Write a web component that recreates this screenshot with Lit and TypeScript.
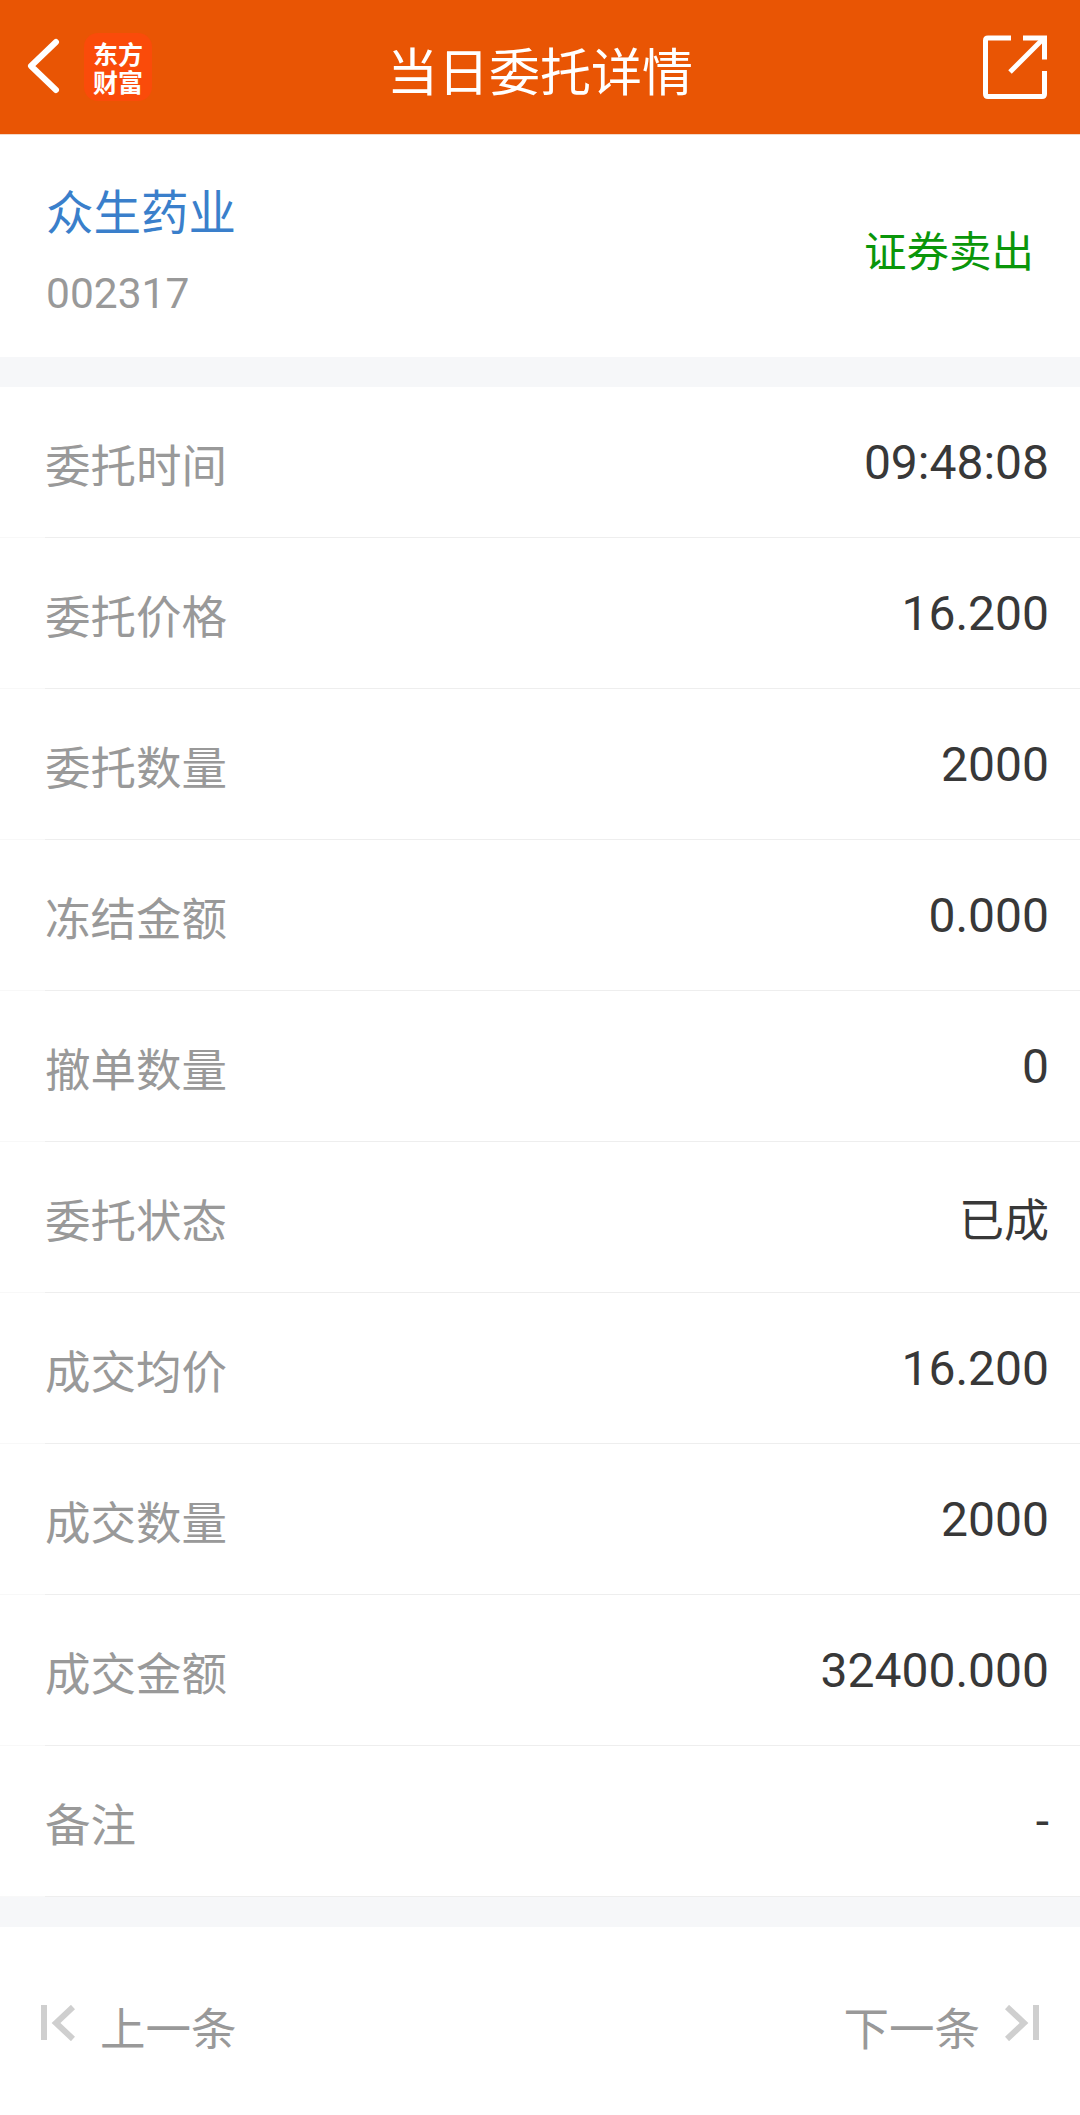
import { LitElement, html, css } from "lit";
import { customElement } from "lit/decorators.js";
import { classMap } from "lit/directives/class-map.js";

const rows: [string, string][] = [
  ["委托时间", "09:48:08"],
  ["委托价格", "16.200"],
  ["委托数量", "2000"],
  ["冻结金额", "0.000"],
  ["撤单数量", "0"],
  ["委托状态", "已成"],
  ["成交均价", "16.200"],
  ["成交数量", "2000"],
  ["成交金额", "32400.000"],
  ["备注", "-"],
];

@customElement("app-root")
export class AppRoot extends LitElement {
  static styles = css`
    :host {
      display: block;
      width: 1080px;
      height: 2115px;
      background: #fff;
      overflow: hidden;
      font-family: Roboto, "Noto Sans CJK SC", sans-serif;
    }
    .header {
      height: 135px;
      background: #e95504;
      display: flex;
      align-items: center;
      position: relative;
      border-bottom: 1px solid #f3d9c8;
      box-sizing: border-box;
    }
    .back { margin-left: 26px; width: 36px; height: 58px; flex: none; }
    .logo {
      margin-left: 22px;
      width: 68px;
      height: 68px;
      flex: none;
      border-radius: 14px;
      background: #fa4b0a;
      color: #fff;
      font-family: "Noto Sans CJK SC", sans-serif;
      font-weight: 700;
      font-size: 25px;
      line-height: 28px;
      display: flex;
      align-items: center;
      justify-content: center;
      text-align: center;
    }
    .logo span { width: 52px; display: block; }
    .title {
      position: absolute;
      left: 200px;
      right: 200px;
      top: 0;
      text-align: center;
      color: #fff;
      font-size: 51px;
      line-height: 138px;
      font-family: "Noto Sans CJK SC", sans-serif;
    }
    .share { margin-left: auto; margin-right: 33px; width: 64px; height: 64px; flex: none; }
    .stock {
      height: 222px;
      box-sizing: border-box;
      display: flex;
      align-items: center;
      justify-content: space-between;
      padding: 0 46px;
    }
    .stock-info { margin-top: 6px; }
    .name {
      color: #3a7fcb;
      font-size: 47.500px;
      line-height: 60px;
      margin-bottom: 29px;
      font-family: "Noto Sans CJK SC", sans-serif;
    }
    .code { color: #999; font-size: 42.500px; line-height: 50px; }
    .side {
      color: #0a960a;
      font-size: 42.500px;
      line-height: 50px;
      margin-top: 5px;
      font-family: "Noto Sans CJK SC", sans-serif;
    }
    .gap { height: 30px; background: #f6f7f9; }
    .row {
      height: 151px;
      box-sizing: border-box;
      padding: 0 31px 1px 45px;
      background:
        linear-gradient(#eeeeee, #eeeeee) 45px 100% / 100% 1px no-repeat,
        linear-gradient(#f8f8f8, #f8f8f8) 0 100% / 100% 1px no-repeat;
      display: flex;
      align-items: center;
      justify-content: space-between;
    }
    .label {
      color: #999;
      font-size: 45.500px;
      margin-top: 2px;
      font-family: "Noto Sans CJK SC", sans-serif;
    }
    .value {
      color: #383838;
      font-size: 48px;
      font-family: Roboto, "Noto Sans CJK SC", sans-serif;
    }
    .value.cjk { font-size: 45px; }
    .footer {
      height: 189px;
      display: flex;
      align-items: center;
      justify-content: space-between;
      padding: 0 41px;
      color: #999;
      font-size: 45.500px;
      font-family: "Noto Sans CJK SC", sans-serif;
    }
    .nav { display: flex; align-items: center; gap: 25px; margin-bottom: -8px; }
    .nav svg { width: 34px; height: 36px; flex: none; margin-top: -6px; }
  `;

  render() {
    return html`
      <div class="header">
        <svg class="back" viewBox="0 0 36 58" fill="none" stroke="#fff" stroke-width="6" stroke-linecap="round" stroke-linejoin="round">
          <path d="M30 4 L5 28 L30 52" />
        </svg>
        <div class="logo"><span>东方财富</span></div>
        <div class="title">当日委托详情</div>
        <svg class="share" viewBox="0 0 64 64" fill="none" stroke="#fff" stroke-width="5">
          <path d="M28 3 H5 Q2.5 3 2.500 5.500 V59 Q2.500 61.500 5 61.500 H59 Q61.500 61.500 61.500 59 V36" stroke-linejoin="round" />
          <path d="M40 3 H61.500 V24.500" />
          <path d="M27 37 L60 4" />
        </svg>
      </div>
      <div class="stock">
        <div class="stock-info">
          <div class="name">众生药业</div>
          <div class="code">002317</div>
        </div>
        <div class="side">证券卖出</div>
      </div>
      <div class="gap"></div>
      ${rows.map(
        ([k, v]) => html`<div class="row"><span class="label">${k}</span><span class=${classMap({ value: true, cjk: v === "已成" })}>${v}</span></div>`
      )}
      <div class="gap"></div>
      <div class="footer">
        <div class="nav">
          <svg viewBox="0 0 34 36" fill="none" stroke="#cfcfcf" stroke-width="6">
            <path d="M3 0 V35" />
            <path d="M32 2 L15 18 L32 34" />
          </svg>
          <span>上一条</span>
        </div>
        <div class="nav">
          <span>下一条</span>
          <svg viewBox="0 0 34 36" fill="none" stroke="#cfcfcf" stroke-width="6">
            <path d="M2 2 L19 18 L2 34" />
            <path d="M31 0 V35" />
          </svg>
        </div>
      </div>
    `;
  }
}
